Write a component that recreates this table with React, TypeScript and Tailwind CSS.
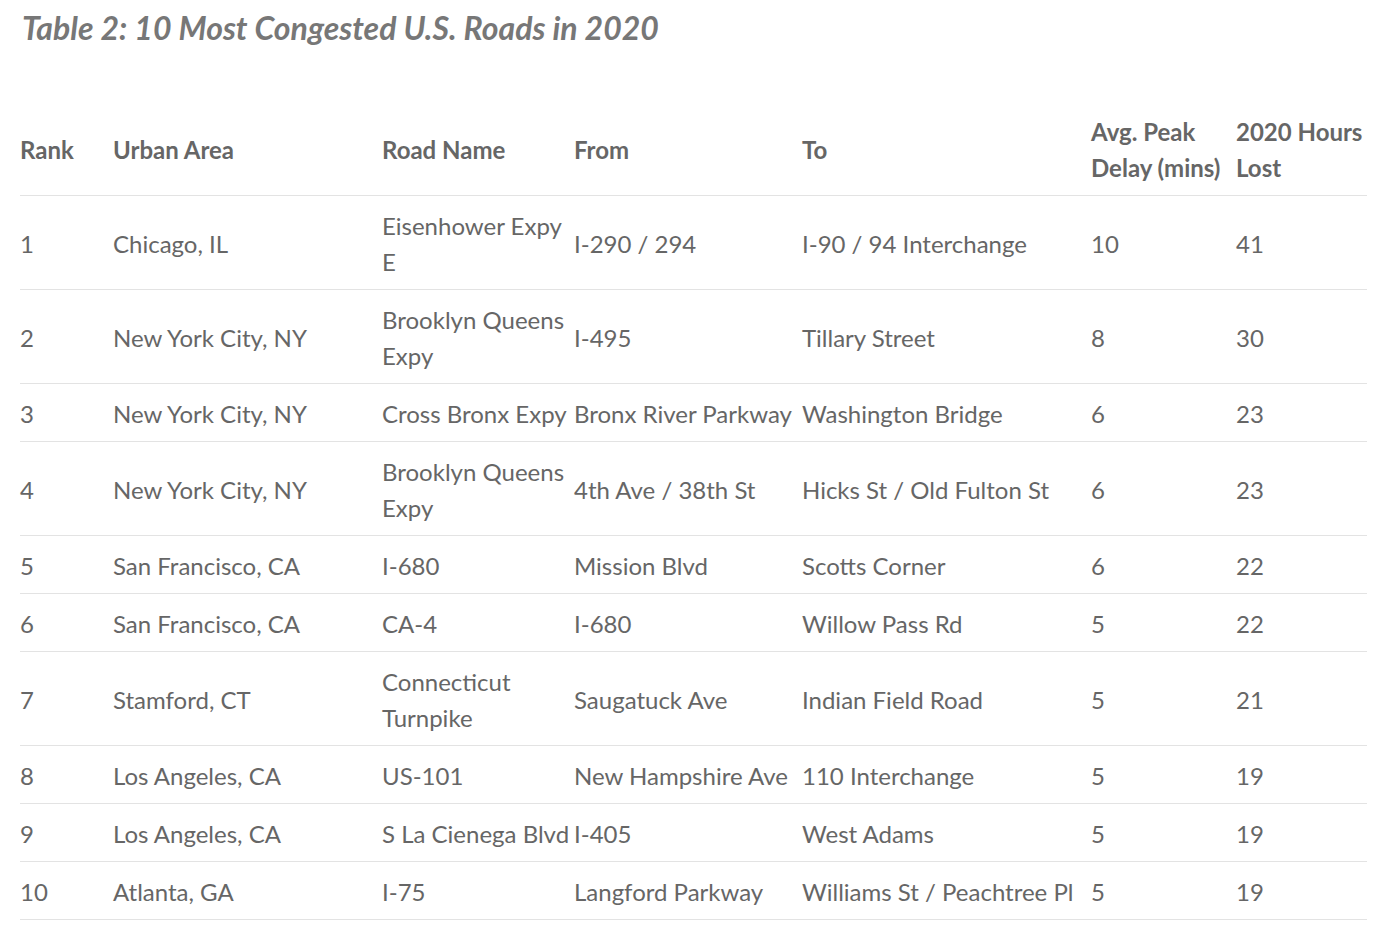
import React from "react";

const rows: [string, string, string, string, string, string, string][] = [
  ["1", "Chicago, IL", "Eisenhower Expy E", "I-290 / 294", "I-90 / 94 Interchange", "10", "41"],
  ["2", "New York City, NY", "Brooklyn Queens Expy", "I-495", "Tillary Street", "8", "30"],
  ["3", "New York City, NY", "Cross Bronx Expy", "Bronx River Parkway", "Washington Bridge", "6", "23"],
  ["4", "New York City, NY", "Brooklyn Queens Expy", "4th Ave / 38th St", "Hicks St / Old Fulton St", "6", "23"],
  ["5", "San Francisco, CA", "I-680", "Mission Blvd", "Scotts Corner", "6", "22"],
  ["6", "San Francisco, CA", "CA-4", "I-680", "Willow Pass Rd", "5", "22"],
  ["7", "Stamford, CT", "Connecticut Turnpike", "Saugatuck Ave", "Indian Field Road", "5", "21"],
  ["8", "Los Angeles, CA", "US-101", "New Hampshire Ave", "110 Interchange", "5", "19"],
  ["9", "Los Angeles, CA", "S La Cienega Blvd", "I-405", "West Adams", "5", "19"],
  ["10", "Atlanta, GA", "I-75", "Langford Parkway", "Williams St / Peachtree Pl", "5", "19"],
];

const widths = ["w-[93px]", "w-[269px]", "w-[192px]", "w-[228px]", "w-[289px]", "w-[145px]", "w-[131px]"];

export default function App() {
  return (
    <div className="min-h-[943px] bg-white text-[#666666] [font-family:Lato,'Noto_Sans',sans-serif]">
      <div className="px-[20px] pt-[8px]">
        <h2 className="text-[32px] leading-[40px] font-bold italic text-[#777777] pl-[2px]">
          Table 2: 10 Most Congested U.S. Roads in 2020
        </h2>
        <table className="mt-[56px] w-[1347px] table-fixed border-collapse text-[24px] leading-[36px]">
          <colgroup>
            {widths.map((w, i) => (
              <col key={i} className={w} />
            ))}
          </colgroup>
          <thead>
            <tr className="border-b border-[#e3e3e3]">
              {["Rank", "Urban Area", "Road Name", "From", "To", "Avg. Peak Delay (mins)", "2020 Hours Lost"].map((h) => (
                <th key={h} className="text-left font-bold pt-[10px] pb-[9px] pr-[2px] align-middle">
                  {h}
                </th>
              ))}
            </tr>
          </thead>
          <tbody>
            {rows.map((r) => (
              <tr key={r[0]} className="border-b border-[#e3e3e3]">
                {r.map((c, i) => (
                  <td key={i} className="text-left font-normal pt-[12px] pb-[9px] pr-[2px] align-middle">
                    {c}
                  </td>
                ))}
              </tr>
            ))}
          </tbody>
        </table>
      </div>
    </div>
  );
}
